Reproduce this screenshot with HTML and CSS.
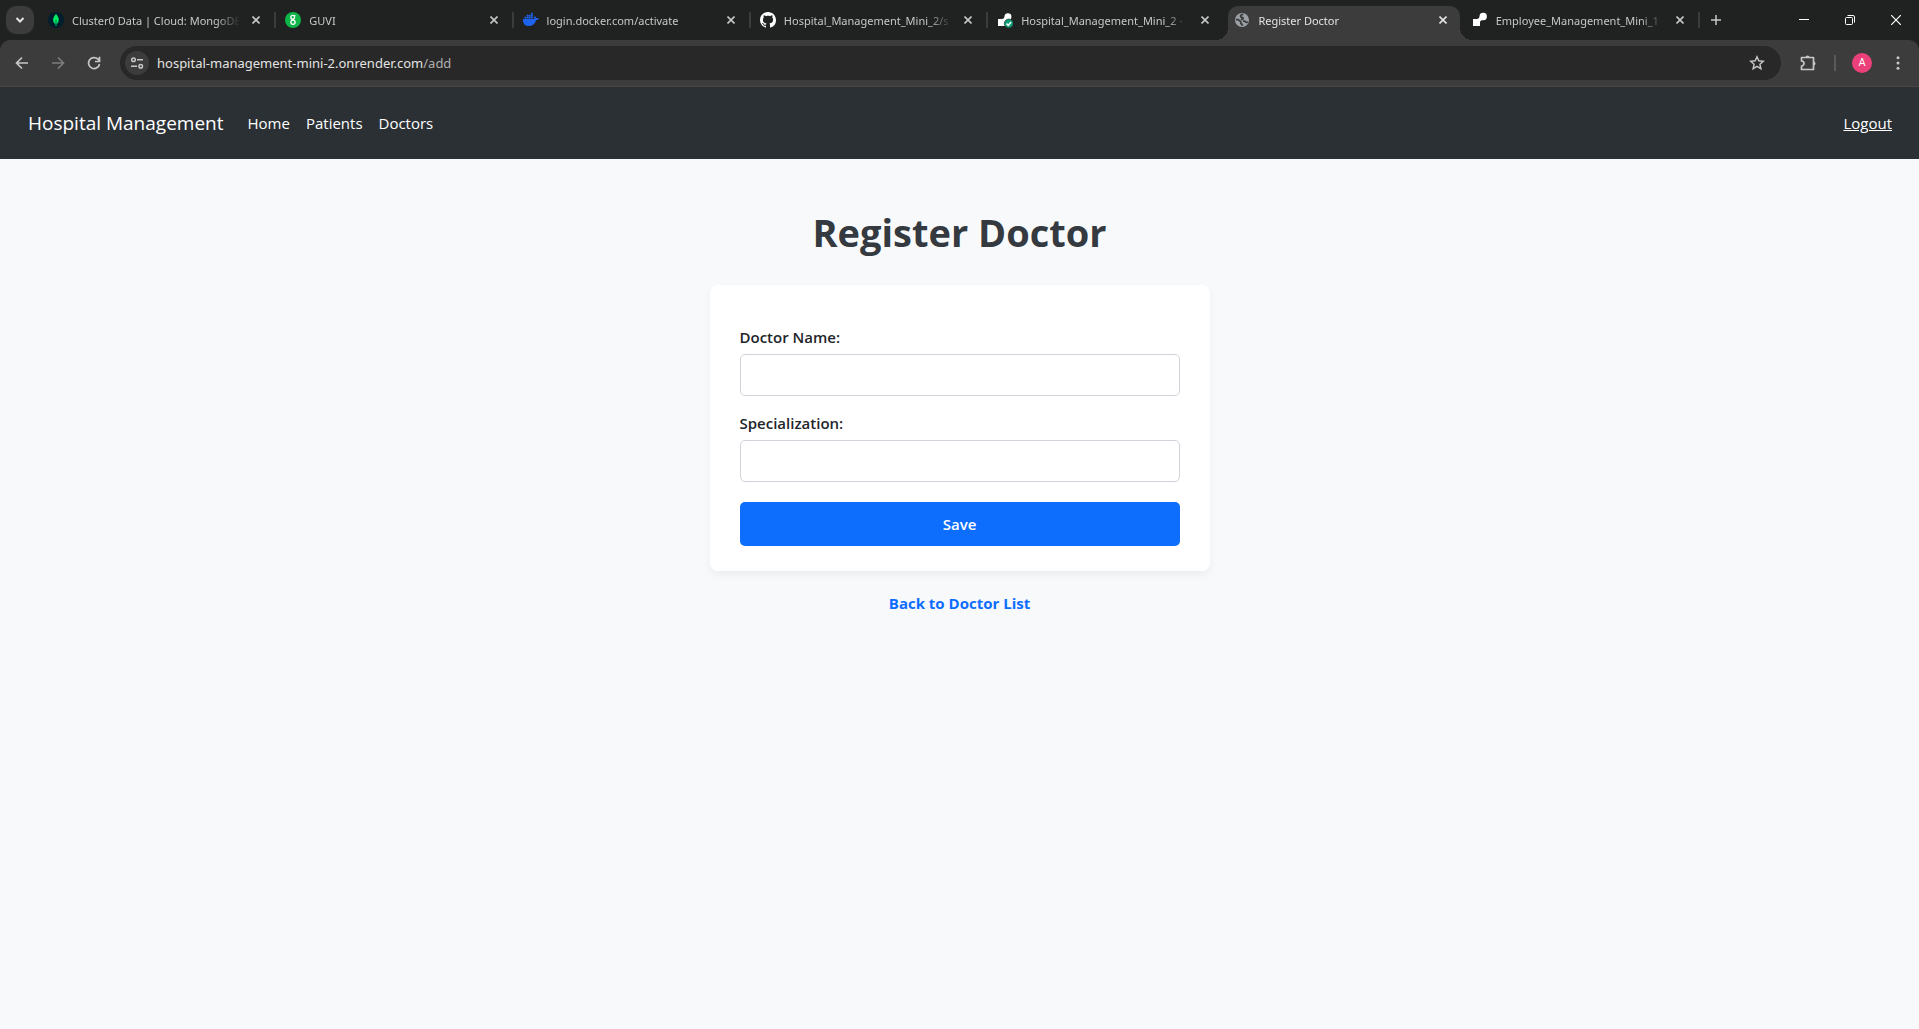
FILE: index.html
```html
<!DOCTYPE html>
<html lang="en">
<head>
<meta charset="utf-8">
<title>Register Doctor</title>
<link rel="stylesheet" href="styles.css">
</head>
<body>
<div class="browser">
  <div class="tabstrip">
    <button class="tab-search" aria-label="Search tabs"><svg width="10" height="10" viewBox="0 0 10 10"><path d="M1.5 3l3.500 3.500L8.500 3" fill="none" stroke="currentColor" stroke-width="2"/></svg></button>
    <div class="tabs">
      <div class="tab">
        <svg class="favicon" viewBox="0 0 16 16"><circle cx="8" cy="8" r="8" fill="#001e2b"/><path d="M8 2C5 5 3.800 9.500 7.600 12.300V14h.8v-1.700C12.200 9.500 11 5 8 2z" fill="#00ed64"/><path d="M8 8v5" stroke="#00684a"/></svg>
        <span class="tab-title">Cluster0 Data | Cloud: MongoDB</span>
        <button class="tab-close" aria-label="Close tab"><svg width="8" height="8" viewBox="0 0 8 8"><path d="M.5.5l7 7M7.500.5l-7 7" stroke="currentColor" stroke-width="1.600"/></svg></button>
      </div>
      <div class="tab">
        <svg class="favicon" viewBox="0 0 16 16"><circle cx="8" cy="8" r="8" fill="#0eb548"/><g fill="none" stroke="#fff" stroke-width="1.300"><circle cx="7.700" cy="5.300" r="1.900"/><path d="M9 4.200l1.300-1M9 7l-2.500 1.300"/><circle cx="8" cy="10.300" r="2.100"/></g></svg>
        <span class="tab-title">GUVI</span>
        <button class="tab-close" aria-label="Close tab"><svg width="8" height="8" viewBox="0 0 8 8"><path d="M.5.5l7 7M7.500.5l-7 7" stroke="currentColor" stroke-width="1.600"/></svg></button>
      </div>
      <div class="tab">
        <svg class="favicon" viewBox="0 0 16 16"><g fill="#1d63ed"><path d="M0 7h11.400c-.6-1-.4-2 .4-3 .8.600 1.200 1.300 1.200 2 1-.2 2.200 0 3 .4-.5 1.200-1.500 1.600-2.900 1.600C12 12 9.500 14 5.800 14 2 14-.2 11.800 0 7z"/><path d="M1.500 4.800h1.800v1.600H1.500zM3.700 4.800h1.800v1.600H3.700zM5.900 4.800h1.800v1.600H5.900zM8.100 4.800h1.800v1.600H8.100zM3.700 2.800h1.800v1.600H3.700zM5.900 2.800h1.800v1.600H5.900zM8.100 2.800h1.800v1.600H8.100zM8.100.8h1.800v1.600H8.100z"/></g></svg>
        <span class="tab-title">login.docker.com/activate</span>
        <button class="tab-close" aria-label="Close tab"><svg width="8" height="8" viewBox="0 0 8 8"><path d="M.5.5l7 7M7.500.5l-7 7" stroke="currentColor" stroke-width="1.600"/></svg></button>
      </div>
      <div class="tab">
        <svg class="favicon" viewBox="0 0 16 16"><path fill="#fff" d="M8 0C3.580 0 0 3.580 0 8c0 3.540 2.290 6.530 5.470 7.590.4.070.55-.17.55-.38 0-.19-.01-.82-.01-1.490-2.010.37-2.530-.49-2.690-.94-.09-.23-.48-.94-.82-1.130-.28-.15-.68-.52-.01-.53.63-.01 1.080.58 1.230.82.72 1.210 1.870.87 2.330.66.070-.52.28-.87.51-1.070-1.780-.2-3.640-.89-3.640-3.950 0-.87.31-1.590.82-2.150-.08-.2-.36-1.020.08-2.120 0 0 .67-.21 2.200.82.64-.18 1.320-.27 2-.27s1.360.09 2 .27c1.530-1.040 2.200-.82 2.200-.82.44 1.100.16 1.920.08 2.120.51.56.82 1.270.82 2.150 0 3.070-1.870 3.750-3.650 3.950.29.25.54.73.54 1.480 0 1.070-.01 1.930-.01 2.200 0 .21.15.46.55.38A8.010 8.010 0 0 0 16 8c0-4.420-3.580-8-8-8z"/></svg>
        <span class="tab-title">Hospital_Management_Mini_2/s</span>
        <button class="tab-close" aria-label="Close tab"><svg width="8" height="8" viewBox="0 0 8 8"><path d="M.5.5l7 7M7.500.5l-7 7" stroke="currentColor" stroke-width="1.600"/></svg></button>
      </div>
      <div class="tab">
        <svg class="favicon" viewBox="0 0 16 16"><path d="M1 7h3.500C7 7 7.500 5.500 7.500 4a3.500 3.500 0 1 1 3.500 4.200C9 8.200 8 8.500 8 11v3H1z" fill="#fff"/><circle cx="11.800" cy="11.500" r="4.500" fill="#0f9d76" stroke="#202221" stroke-width=".6"/><path d="M9.500 11.600l1.700 1.700 3-3.400" fill="none" stroke="#fff" stroke-width="1.500"/></svg>
        <span class="tab-title">Hospital_Management_Mini_2 ·</span>
        <button class="tab-close" aria-label="Close tab"><svg width="8" height="8" viewBox="0 0 8 8"><path d="M.5.5l7 7M7.500.5l-7 7" stroke="currentColor" stroke-width="1.600"/></svg></button>
      </div>
      <div class="tab active">
        <svg class="favicon" viewBox="0 0 16 16"><circle cx="8" cy="8" r="7" fill="#9aa0a6"/><path d="M9.300 2.300C7 2.600 6.300 3.500 6.600 4.600c.3.900 1.500.7 2.300 1.100.6.400.2 1.500-.6 1.600H6.800M2 7.600h2.400L6.800 9.900v1.700l1.500.9v1.300M9 9.200h1.600c.9.100.9 1.200 1.800 1.200l1.600-.4" fill="none" stroke="#3c3c3c" stroke-width="1.700"/></svg>
        <span class="tab-title">Register Doctor</span>
        <button class="tab-close" aria-label="Close tab"><svg width="8" height="8" viewBox="0 0 8 8"><path d="M.5.5l7 7M7.500.5l-7 7" stroke="currentColor" stroke-width="1.600"/></svg></button>
      </div>
      <div class="tab">
        <svg class="favicon" viewBox="0 0 16 16"><path d="M1 7h3.500C7 7 7.500 5.500 7.500 4a3.700 3.700 0 1 1 3.700 4.200C9 8.200 8 8.500 8 11v3H1z" fill="#fff"/></svg>
        <span class="tab-title">Employee_Management_Mini_1</span>
        <button class="tab-close" aria-label="Close tab"><svg width="8" height="8" viewBox="0 0 8 8"><path d="M.5.5l7 7M7.500.5l-7 7" stroke="currentColor" stroke-width="1.600"/></svg></button>
      </div>
    </div>
    <button class="new-tab" aria-label="New tab"><svg width="10" height="10" viewBox="0 0 10 10"><path d="M5 0v10M0 5h10" stroke="currentColor" stroke-width="1.500"/></svg></button>
    <div class="window-controls">
      <button aria-label="Minimize"><svg width="10" height="10" viewBox="0 0 10 10"><path d="M0 4.500h10" stroke="currentColor"/></svg></button>
      <button aria-label="Restore"><svg width="10" height="10" viewBox="0 0 10 10"><g fill="none" stroke="currentColor"><rect x=".5" y="2.500" width="7" height="7" rx="1"/><path d="M2.500.5H8A1.500 1.500 0 0 1 9.500 2v5.500"/></g></svg></button>
      <button aria-label="Close"><svg width="10" height="10" viewBox="0 0 10 10"><path d="M0 0l10 10M10 0L0 10" stroke="currentColor" stroke-width="1.200"/></svg></button>
    </div>
  </div>
  <div class="toolbar">
    <button class="tool" aria-label="Back"><svg width="14" height="14" viewBox="0 0 14 14"><path d="M13 7H2M7 1.500L1.500 7 7 12.500" fill="none" stroke="currentColor" stroke-width="1.700"/></svg></button>
    <button class="tool dim" aria-label="Forward"><svg width="14" height="14" viewBox="0 0 14 14"><path d="M1 7h11M7 1.500L12.500 7 7 12.500" fill="none" stroke="currentColor" stroke-width="1.700"/></svg></button>
    <button class="tool" aria-label="Reload"><svg width="14" height="14" viewBox="0 0 14 14"><path d="M12.500 8A5.500 5.500 0 1 1 11 3.200L12.300 4.500M12.500.8v4.700H8" fill="none" stroke="currentColor" stroke-width="1.700"/></svg></button>
    <div class="omnibox">
      <button class="site-info" aria-label="Site information"><svg width="14" height="14" viewBox="0 0 14 14"><g fill="none" stroke="currentColor" stroke-width="1.500"><circle cx="3.500" cy="3.700" r="1.800"/><path d="M7 3.700h6M1 10.300h6"/><circle cx="10.700" cy="10.300" r="1.800"/></g></svg></button>
      <a class="url" href="#">hospital-management-mini-2.onrender.com<span class="path">/add</span></a>
      <button class="star" aria-label="Bookmark"><svg width="16" height="16" viewBox="0 0 16 16"><path d="M8 1.800l1.800 4 4.500.4-3.400 3 1 4.500L8 11.300l-3.900 2.400 1-4.500-3.400-3 4.500-.4z" fill="none" stroke="currentColor" stroke-width="1.400"/></svg></button>
    </div>
    <button class="extensions" aria-label="Extensions"><svg width="18" height="18" viewBox="0 0 18 18"><path d="M2.500 3.500H14.500V15.500H2.500V12a2.300 2.300 0 0 0 0-5z" fill="none" stroke="currentColor" stroke-width="1.700" stroke-linejoin="round"/><path d="M6.500 3.500a2 2 0 0 1 4 0zM14.500 7.500a2 2 0 0 1 0 4z" fill="currentColor"/></svg></button>
    <span class="tool-divider"></span>
    <button class="avatar" aria-label="Profile">A</button>
    <button class="menu" aria-label="Menu"><svg width="4" height="14" viewBox="0 0 4 14"><g fill="currentColor"><circle cx="2" cy="1.700" r="1.500"/><circle cx="2" cy="7" r="1.500"/><circle cx="2" cy="12.300" r="1.500"/></g></svg></button>
  </div>
</div>
<nav class="navbar">
  <a class="brand" href="#">Hospital Management</a>
  <a class="nav-link" href="#">Home</a>
  <a class="nav-link" href="#">Patients</a>
  <a class="nav-link" href="#">Doctors</a>
  <a class="logout" href="#">Logout</a>
</nav>
<main class="page">
  <h1>Register Doctor</h1>
  <form class="card">
    <label for="name">Doctor Name:</label>
    <input type="text" id="name">
    <label for="specialization">Specialization:</label>
    <input type="text" id="specialization">
    <button class="save" type="button">Save</button>
  </form>
  <a class="back" href="#">Back to Doctor List</a>
</main>
</body>
</html>
```
FILE: styles.css
```css
* { box-sizing: border-box; }

body {
  margin: 0;
  min-height: 100vh;
  background: #f8f9fb;
  color: #212529;
  font: 15px/24px "Segoe UI", "Open Sans", "Noto Sans", sans-serif;
}

svg { display: block; flex: none; }

button {
  padding: 0;
  border: 0;
  background: none;
  color: inherit;
  font: inherit;
}

/* Browser window */
.browser {
  background: #202221;
  color: #c7c7c7;
  font-family: "Segoe UI", "Noto Sans", sans-serif;
  font-size: 11px;
}

.browser button {
  display: flex;
  flex: none;
  align-items: center;
  justify-content: center;
}

.tabstrip {
  display: flex;
  align-items: center;
  height: 40px;
  padding-left: 6px;
}

.browser .tab-search {
  width: 28px;
  height: 28px;
  margin-right: 5px;
  border-radius: 10px;
  background: #3c3c3c;
  color: #e3e3e3;
}

.tabs {
  display: flex;
  flex: 0 1 1661px;
  min-width: 0;
  height: 40px;
}

.tab {
  position: relative;
  display: flex;
  flex: 1 1 237px;
  align-items: center;
  min-width: 0;
  padding: 0 12px 0 9px;
}

.tab::after {
  content: "";
  position: absolute;
  right: 0;
  top: 12px;
  width: 2px;
  height: 16px;
  background: #3c3c3c;
}

.tab:has(+ .active)::after { display: none; }

.tab.active {
  flex-basis: 231px;
  margin: 6px 3px 0;
  padding: 0 9px 6px 6px;
  border-radius: 10px 10px 0 0;
  background: #3c3c3c;
  color: #e3e3e3;
}

.tab.active::before,
.tab.active::after {
  content: "";
  position: absolute;
  top: auto;
  bottom: 0;
  width: 12px;
  height: 12px;
}

.tab.active::before {
  left: -12px;
  background: radial-gradient(circle at 0 0, transparent 12px, #3c3c3c 12px);
}

.tab.active::after {
  right: -12px;
  background: radial-gradient(circle at 100% 0, transparent 12px, #3c3c3c 12px);
}

.favicon { width: 16px; height: 16px; }

.tab-title {
  flex: 1;
  min-width: 0;
  margin: 0 8px;
  padding-top: 1px;
  overflow: hidden;
  white-space: nowrap;
  -webkit-mask-image: linear-gradient(to left, transparent, #000 24px);
  mask-image: linear-gradient(to left, transparent, #000 24px);
}

.browser .tab-close { width: 16px; height: 16px; }

.browser .new-tab { width: 32px; height: 28px; }

.window-controls {
  display: flex;
  margin-left: auto;
  color: #fff;
}

.window-controls button { width: 46px; height: 40px; }

.toolbar {
  display: flex;
  align-items: center;
  height: 47px;
  padding: 0 8px 0 4px;
  border-bottom: 1px solid #474747;
  border-radius: 10px 10px 0 0;
  background: #3c3c3c;
}

.tool { width: 36px; height: 34px; }
.browser .dim { color: #7d7d7d; }

.omnibox {
  display: flex;
  flex: 1;
  align-items: center;
  min-width: 0;
  height: 34px;
  margin-left: 8px;
  padding: 0 16px 0 5px;
  border-radius: 17px;
  background: #282828;
}

.site-info {
  width: 24px;
  height: 24px;
  border-radius: 50%;
}

.browser .site-info { background: #3c3c3c; }

.url {
  flex: 1;
  margin-left: 8px;
  color: #e3e3e3;
  font-size: 13px;
  text-decoration: none;
}

.path { color: #b0b0b0; }

.extensions { width: 18px; margin: 0 17px 0 18px; }

.tool-divider { width: 2px; height: 16px; background: #5a5a5a; }

.browser .avatar {
  width: 20px;
  height: 20px;
  margin: 0 13px 0 16px;
  border-radius: 50%;
  background: #ec407a;
  color: #fff;
  font: 11px/20px Roboto, sans-serif;
}

.menu { width: 26px; height: 24px; }

/* Site navigation */
.navbar {
  display: flex;
  align-items: center;
  gap: 16px;
  min-height: 72px;
  padding: 0 27px 0 28px;
  background: #2b3035;
}

.navbar a { color: #fff; text-decoration: none; }
.navbar .brand { margin-right: 8px; font-size: 19px; }
.navbar .logout { margin-left: auto; text-decoration: underline; }

/* Registration form */
.page {
  display: flex;
  flex-direction: column;
  align-items: center;
  padding: 48px 20px;
}

h1 {
  margin: 0 0 28px;
  color: #343a40;
  font-size: 38px;
  font-weight: 700;
  line-height: 50px;
}

.card {
  display: flex;
  flex-direction: column;
  width: 100%;
  max-width: 500px;
  margin-bottom: 20px;
  padding: 40px 30px 25px;
  border-radius: 8px;
  background: #fff;
  box-shadow: 0 4px 8px rgba(0, 0, 0, 0.05);
}

label { margin-bottom: 5px; font-weight: 600; }

input {
  height: 42px;
  margin-bottom: 15px;
  padding: 8px 10px;
  border: 1px solid #ced4da;
  border-radius: 5px;
  background: #fff;
  font: inherit;
}

.save {
  height: 44px;
  margin-top: 5px;
  border-radius: 5px;
  background: #0d6efd;
  color: #fff;
  font-weight: 600;
}

.back {
  color: #0d6efd;
  font-weight: 700;
  text-decoration: none;
}
```
